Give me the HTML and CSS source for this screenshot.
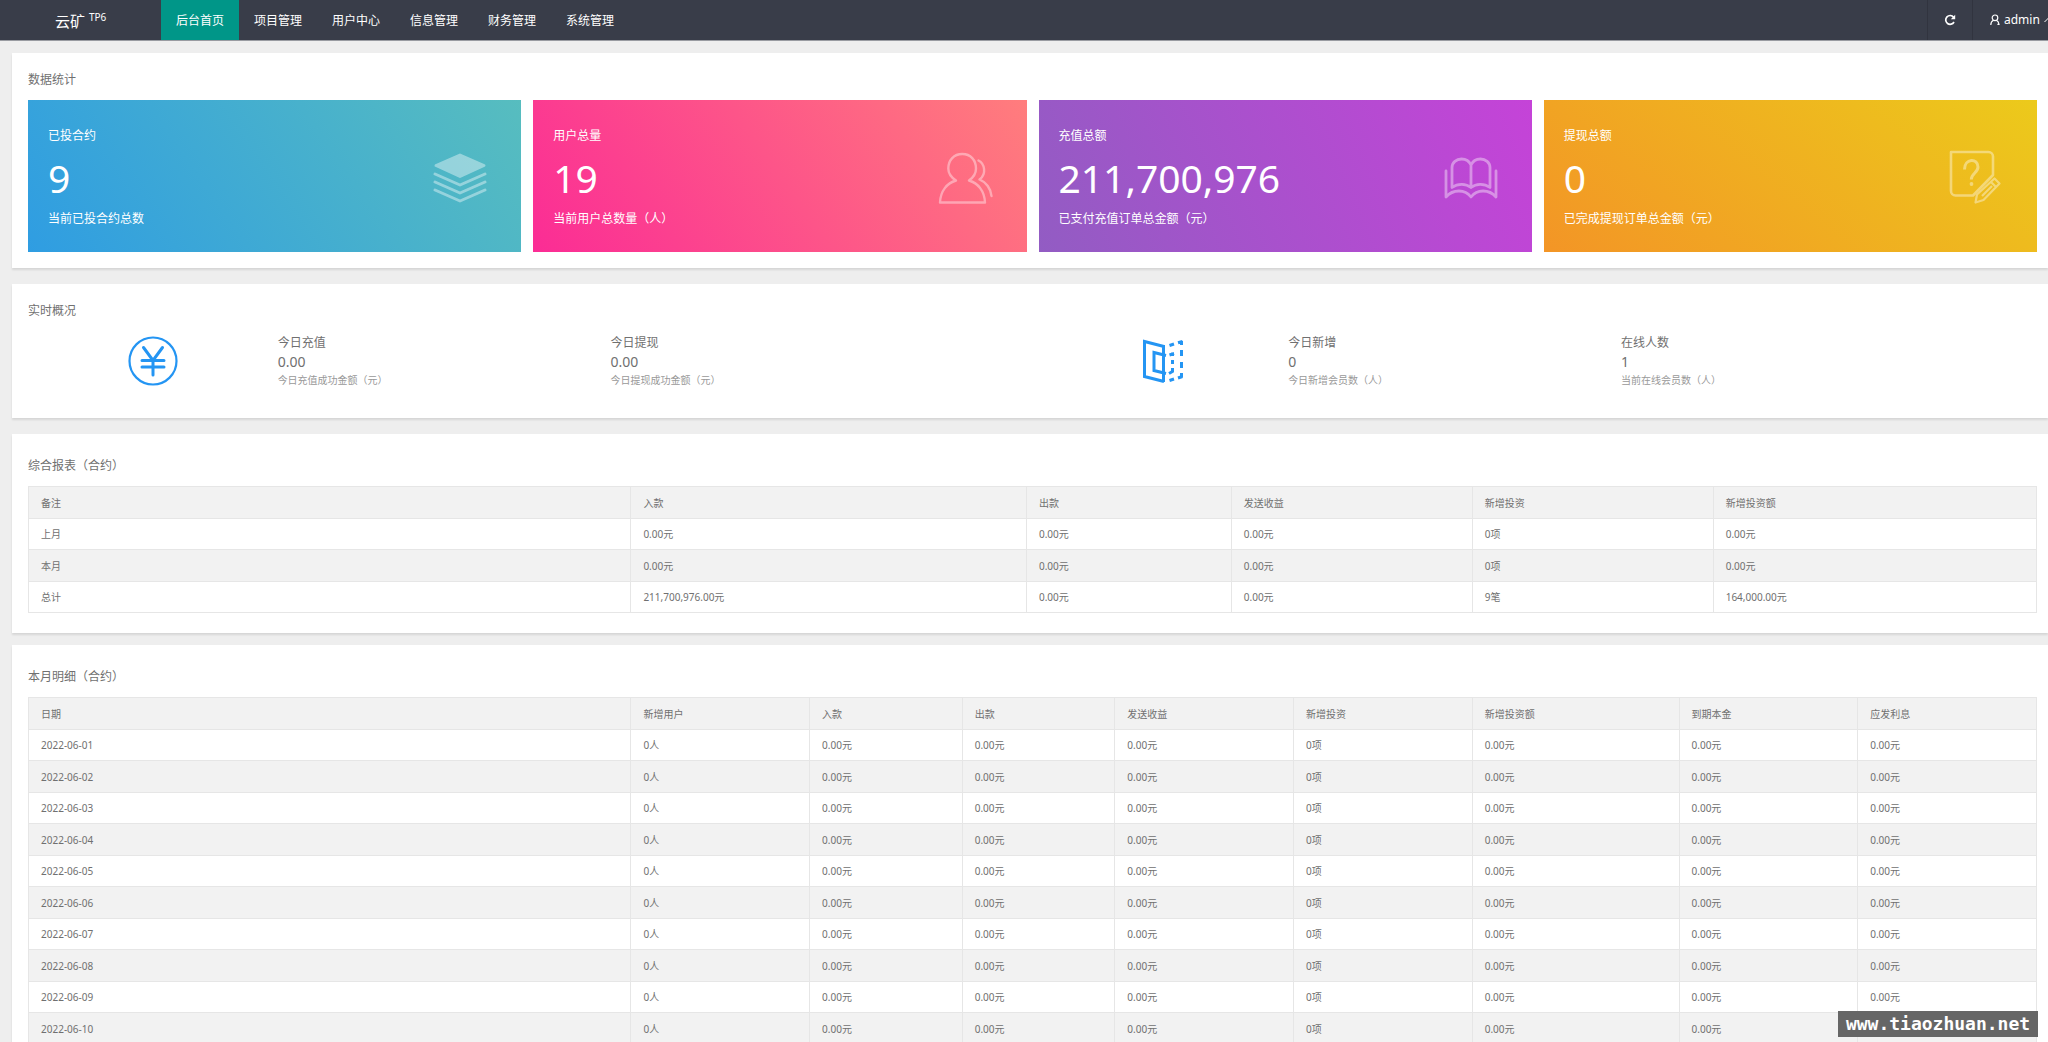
FILE: index.html
```html
<!DOCTYPE html>
<html lang="zh-CN">
<head>
    <meta charset="UTF-8">
    <meta name="viewport" content="width=device-width, initial-scale=1.0">
    <title>后台首页</title>
    <link rel="stylesheet" href="styles.css">
</head>
<body>
    <header class="header">
        <a class="logo" href="#">云矿 <sup>TP6</sup></a>
        <nav class="nav">
            <a class="active" href="#">后台首页</a>
            <a href="#">项目管理</a>
            <a href="#">用户中心</a>
            <a href="#">信息管理</a>
            <a href="#">财务管理</a>
            <a href="#">系统管理</a>
        </nav>
        <div class="tools">
            <button class="refresh" type="button" aria-label="刷新">
                <svg width="12" height="12" viewBox="0 0 12 12"><path d="M9.6 3.2A4.4 4.4 0 1 0 10 8" fill="none" stroke="#fff" stroke-width="1.7"/><path d="M11.2 .8v4.4H6.8z" fill="#fff"/></svg>
            </button>
            <button class="user" type="button">
                <svg width="10" height="12" viewBox="0 0 10 12" fill="none" stroke="#fff" stroke-width="1.2"><circle cx="5" cy="3.8" r="2.8"/><path d="M3.6 6.2C1.8 7 .8 8.600 .8 11M6.400 6.200C8 7 8.800 8.400 9 10.400H7.400"/></svg>
                <span>admin</span>
                <svg width="9" height="6" viewBox="0 0 9 6" fill="none" stroke="#fff" stroke-width="1"><path d="M.5 5l4-4 4 4"/></svg>
            </button>
        </div>
    </header>

    <main class="main">
        <section class="panel">
            <h2>数据统计</h2>
            <div class="cards">
                <div class="card blue">
                    <div>
                        <p>已投合约</p>
                        <strong>9</strong>
                        <p>当前已投合约总数</p>
                    </div>
                    <svg width="56" height="56" viewBox="0 0 56 56" fill="none" stroke="#fff" stroke-width="3" stroke-linecap="round" stroke-linejoin="round"><path d="M28 5L52 15.500L28 26.500L4 15.500z" fill="#fff"/><path d="M3 24l25 11 25-11M3 32l25 11 25-11M3 40l25 11 25-11"/></svg>
                </div>
                <div class="card pink">
                    <div>
                        <p>用户总量</p>
                        <strong>19</strong>
                        <p>当前用户总数量（人）</p>
                    </div>
                    <svg width="56" height="56" viewBox="0 0 56 56" fill="none" stroke="#fff" stroke-width="2.400" stroke-linecap="round" stroke-linejoin="round"><path d="M18 30.500C12.500 27 10.300 23 10.300 18.500C10.300 10 16 4 24.300 4S38 10 38 18.500C38 23 36 27 31 30.500C40 33 46.500 41 47 52.500H2C2.500 41 9 33 18 30.500z"/><path d="M40.500 10.500C46.500 13.500 49 24 41.500 29.500C48 32 53 39 53.500 46"/></svg>
                </div>
                <div class="card purple">
                    <div>
                        <p>充值总额</p>
                        <strong>211,700,976</strong>
                        <p>已支付充值订单总金额（元）</p>
                    </div>
                    <svg width="56" height="56" viewBox="0 0 56 56" fill="none" stroke="#fff" stroke-width="2.800" stroke-linecap="round" stroke-linejoin="round"><path d="M28 37.500V15C26 10.500 22 9 18.500 9C13.500 9 9 12.500 9 17.500V37.500C15 33 23 33.500 28 37.500C33 33.500 41 33 47 37.500V17.500C47 12.500 42.500 9 37.500 9C34 9 30 10.500 28 15"/><path d="M3 21V47C10 39 22 39 28 47C34 39 46 39 53 47V21"/></svg>
                </div>
                <div class="card orange">
                    <div>
                        <p>提现总额</p>
                        <strong>0</strong>
                        <p>已完成提现订单总金额（元）</p>
                    </div>
                    <svg width="56" height="56" viewBox="0 0 56 56" fill="none" stroke="#fff" stroke-width="2.600" stroke-linejoin="round"><path d="M3 2H40.500C43 2 45 4 45 6.500V25L25 45.500H7.500C5 45.500 3 43.500 3 41z"/><path d="M16.500 19.500C16.500 8 30 8 30 17C30 22.500 23.300 23.500 23.300 29.500" stroke-width="3"/><circle cx="23.500" cy="34" r="1.900" fill="#fff" stroke="none"/><path d="M46.500 28.500L51.500 33.500L35.500 50L27.500 52.500L29 44.500zM43 32l5 5M34 46l10-10" stroke-width="2.200"/></svg>
                </div>
            </div>
        </section>

        <section class="panel">
            <h2>实时概况</h2>
            <div class="live">
                <div class="live-group">
                    <div class="live-icon">
                        <svg width="50" height="50" viewBox="0 0 50 50" fill="none" stroke="#2495f3" stroke-width="2.200" stroke-linecap="round"><circle cx="25" cy="25" r="23.500"/><path d="M15.500 11.500L25 24.500L34.500 11.500M25 24.500V39M14 24.500H36M14 31H36" stroke-width="3"/></svg>
                    </div>
                    <div class="live-item">
                        <p>今日充值</p>
                        <strong>0.00</strong>
                        <small>今日充值成功金额（元）</small>
                    </div>
                    <div class="live-item">
                        <p>今日提现</p>
                        <strong>0.00</strong>
                        <small>今日提现成功金额（元）</small>
                    </div>
                </div>
                <div class="live-group">
                    <div class="live-icon">
                        <svg width="50" height="50" viewBox="0 0 50 50" fill="none" stroke="#2495f3" stroke-width="3"><path d="M26 10.500L6.500 5.500V40.500L26 45.500M25.500 9V46M28 19.500L16 16.500V34.500L28 37.500"/><path d="M31.500 9.500L36 8M40 6.800L44.500 5.500M31.500 19L36 17.500M34.500 16.500V20M34.500 24V28M34.500 32V35.500L31 37.500M31.500 44.500L36 43M40 42L44.500 40.500M43.500 5V9M43.500 14V20M43.500 26V32M43.500 37V41"/></svg>
                    </div>
                    <div class="live-item">
                        <p>今日新增</p>
                        <strong>0</strong>
                        <small>今日新增会员数（人）</small>
                    </div>
                    <div class="live-item">
                        <p>在线人数</p>
                        <strong>1</strong>
                        <small>当前在线会员数（人）</small>
                    </div>
                </div>
            </div>
        </section>

        <section class="panel report">
            <h2>综合报表（合约）</h2>
            <table class="table summary">
                <thead>
                    <tr><th>备注</th><th>入款</th><th>出款</th><th>发送收益</th><th>新增投资</th><th>新增投资额</th></tr>
                </thead>
                <tbody>
                    <tr><td>上月</td><td>0.00元</td><td>0.00元</td><td>0.00元</td><td>0项</td><td>0.00元</td></tr>
                    <tr><td>本月</td><td>0.00元</td><td>0.00元</td><td>0.00元</td><td>0项</td><td>0.00元</td></tr>
                    <tr><td>总计</td><td>211,700,976.00元</td><td>0.00元</td><td>0.00元</td><td>9笔</td><td>164,000.00元</td></tr>
                </tbody>
            </table>
        </section>

        <section class="panel report">
            <h2>本月明细（合约）</h2>
            <table class="table detail">
                <thead>
                    <tr><th>日期</th><th>新增用户</th><th>入款</th><th>出款</th><th>发送收益</th><th>新增投资</th><th>新增投资额</th><th>到期本金</th><th>应发利息</th></tr>
                </thead>
                <tbody>
                    <tr><td>2022-06-01</td><td>0人</td><td>0.00元</td><td>0.00元</td><td>0.00元</td><td>0项</td><td>0.00元</td><td>0.00元</td><td>0.00元</td></tr>
                    <tr><td>2022-06-02</td><td>0人</td><td>0.00元</td><td>0.00元</td><td>0.00元</td><td>0项</td><td>0.00元</td><td>0.00元</td><td>0.00元</td></tr>
                    <tr><td>2022-06-03</td><td>0人</td><td>0.00元</td><td>0.00元</td><td>0.00元</td><td>0项</td><td>0.00元</td><td>0.00元</td><td>0.00元</td></tr>
                    <tr><td>2022-06-04</td><td>0人</td><td>0.00元</td><td>0.00元</td><td>0.00元</td><td>0项</td><td>0.00元</td><td>0.00元</td><td>0.00元</td></tr>
                    <tr><td>2022-06-05</td><td>0人</td><td>0.00元</td><td>0.00元</td><td>0.00元</td><td>0项</td><td>0.00元</td><td>0.00元</td><td>0.00元</td></tr>
                    <tr><td>2022-06-06</td><td>0人</td><td>0.00元</td><td>0.00元</td><td>0.00元</td><td>0项</td><td>0.00元</td><td>0.00元</td><td>0.00元</td></tr>
                    <tr><td>2022-06-07</td><td>0人</td><td>0.00元</td><td>0.00元</td><td>0.00元</td><td>0项</td><td>0.00元</td><td>0.00元</td><td>0.00元</td></tr>
                    <tr><td>2022-06-08</td><td>0人</td><td>0.00元</td><td>0.00元</td><td>0.00元</td><td>0项</td><td>0.00元</td><td>0.00元</td><td>0.00元</td></tr>
                    <tr><td>2022-06-09</td><td>0人</td><td>0.00元</td><td>0.00元</td><td>0.00元</td><td>0项</td><td>0.00元</td><td>0.00元</td><td>0.00元</td></tr>
                    <tr><td>2022-06-10</td><td>0人</td><td>0.00元</td><td>0.00元</td><td>0.00元</td><td>0项</td><td>0.00元</td><td>0.00元</td><td></td></tr>
                </tbody>
            </table>
        </section>
    </main>

    <div class="watermark">www.tiaozhuan.net</div>
</body>
</html>
```
FILE: styles.css
```css
* {
    box-sizing: border-box;
}
body {
    margin: 0;
    overflow: hidden;
    background: #eee;
    color: #707070;
    font: 12px/20px "Noto Sans", "Noto Sans CJK SC", sans-serif;
}
h2, p {
    margin: 0;
    font-size: 12px;
    font-weight: normal;
}
strong {
    display: block;
    font-weight: normal;
}

/* header */
.header {
    display: flex;
    height: 41px;
    overflow: hidden;
    background: #393d49;
    border-bottom: 1px solid #999ba1;
}
.header a {
    color: #fff;
    text-decoration: none;
    line-height: 42px;
}
.logo {
    width: 161px;
    padding-left: 55px;
    font-size: 15px;
    white-space: nowrap;
}
.logo sup {
    font-size: 10px;
    line-height: 1;
}
.nav {
    display: flex;
}
.nav a {
    padding: 0 15px;
}
.nav .active {
    background: #009688;
}
.tools {
    display: flex;
    margin-left: auto;
}
.tools button {
    display: flex;
    align-items: center;
    justify-content: center;
    padding: 0;
    border: 0;
    border-left: 1px solid #31343f;
    background: none;
    color: #fff;
    font: inherit;
}
.tools .refresh {
    width: 45px;
}
.tools .user {
    width: 76px;
    gap: 4px;
    padding-left: 17px;
    justify-content: flex-start;
}
.user svg {
    flex: none;
}

/* panels */
.main {
    padding: 12px 0 0 12px;
}
.panel {
    margin-bottom: 16px;
    padding: 17px 11px 16px 16px;
    background: #fff;
    box-shadow: 0 2px 2px rgba(0, 0, 0, .1);
}
.panel h2 {
    margin-bottom: 10px;
}
.report {
    margin-bottom: 12px;
    padding-top: 22px;
    padding-bottom: 20px;
}

/* stat cards */
.cards {
    display: grid;
    grid-template-columns: repeat(4, 1fr);
    gap: 12px;
}
.card {
    display: flex;
    align-items: center;
    justify-content: space-between;
    padding: 26px 33px 23px 20px;
    color: #fff;
}
.card strong {
    font-size: 39px;
    line-height: 63px;
}
.card svg {
    opacity: .4;
}
.blue {
    background: linear-gradient(-125deg, #57bdbf, #2f9de2);
}
.pink {
    background: linear-gradient(-125deg, #ff7d7d, #fb2c95);
}
.purple {
    background: linear-gradient(-113deg, #c543d8, #925cc3);
}
.orange {
    background: linear-gradient(-141deg, #ecca1b, #f39526);
}

/* live numbers */
.live {
    display: grid;
    grid-template-columns: 1fr 1fr;
    gap: 12px;
    padding: 2px 0 12px;
}
.live-group {
    display: grid;
    grid-template-columns: 3fr 4fr 4fr 1fr;
}
.live-icon {
    display: flex;
    align-items: center;
    justify-content: center;
    padding-bottom: 2px;
}
.live-item {
    line-height: 19px;
}
.live-item strong {
    font-size: 14px;
}
.live-item small {
    display: block;
    color: #999;
    font-size: 10px;
}

/* tables */
.table {
    width: 100%;
    border-collapse: collapse;
    table-layout: fixed;
    font-size: 10px;
    line-height: 16px;
}
.table th, .table td {
    padding: 0 12px;
    border: 1px solid #e6e6e6;
    font-weight: normal;
    text-align: left;
}
.table tr {
    height: 31px;
}
.table thead tr, .table tr:nth-child(even) {
    height: 32px;
    background: #f2f2f2;
}
.table th:first-child {
    width: 30%;
}
.summary th:nth-child(2) {
    width: 19.7%;
}
.summary th:nth-child(3) {
    width: 10.2%;
}
.summary th:nth-child(4), .summary th:nth-child(5) {
    width: 12%;
}
.detail th {
    width: 8.9%;
}
.detail th:nth-child(3), .detail th:nth-child(4) {
    width: 7.6%;
}
.detail th:nth-child(7) {
    width: 10.3%;
}

.watermark {
    position: fixed;
    right: 10px;
    bottom: 5px;
    width: 200px;
    background: #666;
    color: #fff;
    font: bold 18px/26px "DejaVu Sans Mono", monospace;
    text-align: center;
}
```
